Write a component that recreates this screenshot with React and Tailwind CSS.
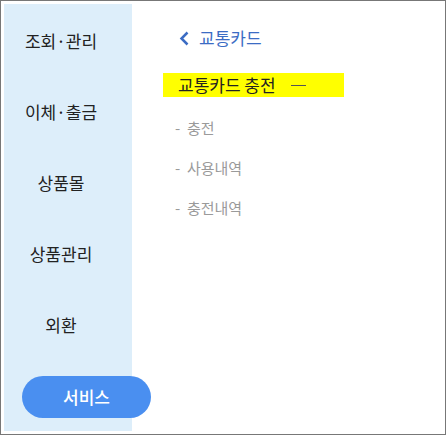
import React from 'react'

const menus = ['조회·관리', '이체·출금', '상품몰', '상품관리', '외환']
const subs = ['충전', '사용내역', '충전내역']

const font = { fontFamily: '"Noto Sans CJK KR", "Noto Sans", sans-serif' }

export default function App() {
	return (
		<div className="w-[446px] h-[435px] bg-white border border-[#777] p-[3px]" style={font}>
			<div className="flex h-full">
				{/* sidebar */}
				<div className="w-[128px] h-full bg-[#ddeefa] shrink-0 flex flex-col">
					<div className="w-[114px] flex flex-col items-center gap-[46px] pt-[24px]">
						{menus.map((m) => (
							<div key={m} className="text-[17px] leading-[25px] text-[#222]">
								{m}
							</div>
						))}
					</div>
					<button className="mt-[39px] ml-[18px] w-[129px] h-[42px] shrink-0 rounded-full bg-[#4a8ff0] text-white text-[17px] font-medium">
						서비스
					</button>
				</div>

				{/* content */}
				<div className="flex-1 pl-[31px] pt-[20px]">
					<div className="flex items-center pl-[16px] h-[28px]">
						<svg width="10" height="15" viewBox="0 0 10 15" className="mr-[10px]">
							<path d="M8.5 1.5 L2.5 7.5 L8.5 13.5" fill="none" stroke="#3b6cc4" strokeWidth="2.5" />
						</svg>
						<span className="text-[17px] text-[#3b6cc4]">교통카드</span>
					</div>
					<div className="mt-[21px] w-[181px] h-[24px] bg-[#ffff00] flex items-center pl-[15px]">
						<span className="text-[17px] text-[#222]">교통카드 충전</span>
						<span className="ml-[15px] w-[15px] h-[1px] bg-[#555]" />
					</div>
					<div className="flex flex-col gap-[17px] pl-[12px] mt-[19px]">
						{subs.map((s) => (
							<div key={s} className="text-[15px] leading-[23px] text-[#9a9a9a]">
								-&nbsp;&nbsp;{s}
							</div>
						))}
					</div>
				</div>
			</div>
		</div>
	)
}
